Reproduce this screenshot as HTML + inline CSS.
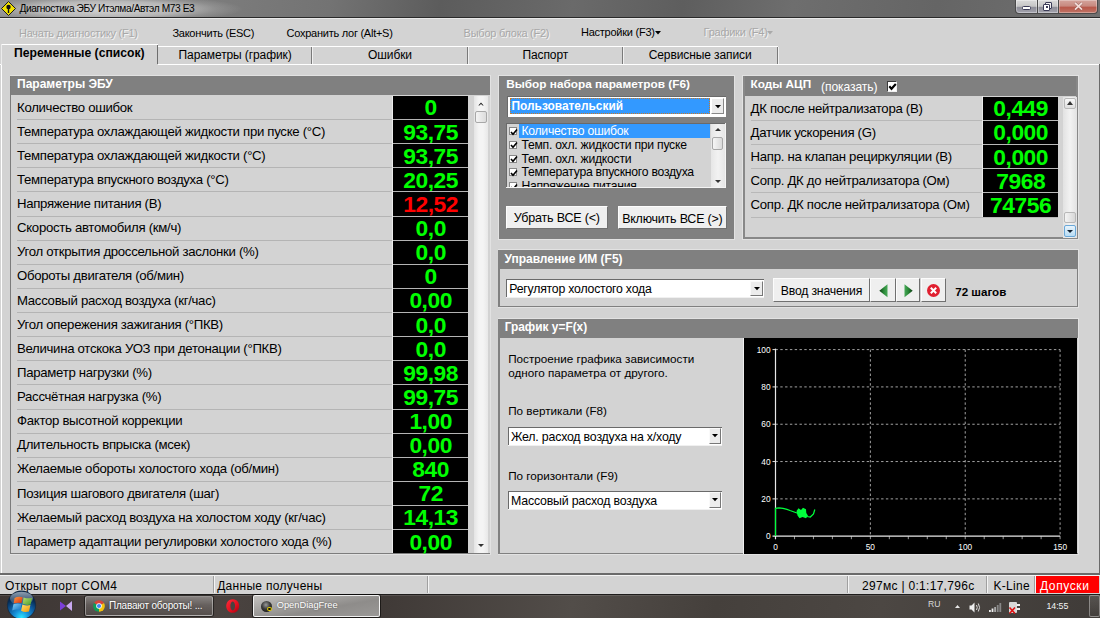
<!DOCTYPE html>
<html><head><meta charset="utf-8"><style>
html,body{margin:0;padding:0;}
body{width:1100px;height:618px;overflow:hidden;position:relative;background:#d3d3d3;font-family:'Liberation Sans', sans-serif;}
</style></head><body>
<div style="position:absolute;left:0;top:0;width:1100px;height:17px;background:linear-gradient(100deg,#8a8a8a 0%,#7a7a7a 22%,#737373 30%,#5c5c5c 40%,#6a6a6a 52%,#5e5e5e 62%,#6e6e6e 72%,#656565 85%,#707070 100%);"></div>
<div style="position:absolute;left:0;top:0;width:270px;height:16.5px;background:radial-gradient(ellipse 135px 14px at 108px 9px,rgba(222,222,222,0.9),rgba(205,205,205,0.7) 55%,rgba(185,185,185,0.3) 80%,rgba(180,180,180,0) 100%);"></div>
<div style="position:absolute;left:0px;top:16.5px;width:1100px;height:1px;background:#2a2a2a;"></div>
<svg style="position:absolute;left:1px;top:1px" width="15" height="15" viewBox="0 0 15 15"><path d="M7.5 0.5 L14.5 7.5 L7.5 14.5 L0.5 7.5Z" fill="#f2e200" stroke="#1a1a1a" stroke-width="1"/><circle cx="7.5" cy="6" r="2.2" fill="#111"/><rect x="6.8" y="7" width="1.4" height="5" fill="#111"/></svg>
<div style="position:absolute;top:3.93px;font-size:10.2px;line-height:10.2px;color:#000;white-space:nowrap;left:19.50px;letter-spacing:-0.4px;">Диагностика ЭБУ Итэлма/Автэл М73 Е3</div>
<div style="position:absolute;left:1015px;top:0;width:22.5px;height:14.2px;border:1px solid #4a4a4a;border-top:none;border-radius:0 0 0 4px;box-sizing:border-box;background:linear-gradient(#dadada,#c6c6c6 48%,#8e8e98 58%,#a4a4ae);box-shadow:inset 0 0 0 1px rgba(255,255,255,0.35);"></div>
<div style="position:absolute;left:1037.5px;top:0;width:21.5px;height:14.2px;border:1px solid #4a4a4a;border-top:none;border-left:none;box-sizing:border-box;background:linear-gradient(#dadada,#c6c6c6 48%,#8e8e98 58%,#a4a4ae);box-shadow:inset 0 0 0 1px rgba(255,255,255,0.35);"></div>
<div style="position:absolute;left:1059px;top:0;width:39px;height:14.2px;border:1px solid #4a4a4a;border-top:none;border-left:none;border-radius:0 0 4px 0;box-sizing:border-box;background:linear-gradient(#d4a49c,#c88a80 45%,#b8584a 58%,#c07466);box-shadow:inset 0 0 0 1px rgba(255,255,255,0.3);"></div>
<div style="position:absolute;left:1022.3px;top:5.9px;width:9.1px;height:4.6px;box-sizing:border-box;background:#fff;border:1.2px solid #3c3c58;border-radius:1.5px;"></div>
<div style="position:absolute;left:1045.3px;top:2px;width:6.5px;height:6.5px;box-sizing:border-box;border:1.2px solid #3c3c58;background:#eee;border-radius:1px;"></div>
<div style="position:absolute;left:1043.3px;top:3.6px;width:7px;height:7px;box-sizing:border-box;border:1.5px solid #3c3c58;background:#fff;border-radius:1px;"></div>
<div style="position:absolute;left:1045.8px;top:6.1px;width:2px;height:2px;background:#3c3c58;"></div>
<svg style="position:absolute;left:1074px;top:2px" width="9" height="8.5" viewBox="0 0 9 8.5"><path d="M1 0.8L8 7.7M8 0.8L1 7.7" stroke="#3c2020" stroke-width="2.6" stroke-opacity="0.35"/><path d="M1 0.8L8 7.7M8 0.8L1 7.7" stroke="#f4dcd8" stroke-width="1.8"/></svg>
<div style="position:absolute;left:0px;top:17.5px;width:1100px;height:1px;background:#e8e8e8;"></div>
<div style="position:absolute;top:27.65px;font-size:11px;line-height:11px;color:#a8a8a8;white-space:nowrap;left:19.00px;letter-spacing:-0.25px;text-shadow:1px 1px 0 #f4f4f4;">Начать диагностику (F1)</div>
<div style="position:absolute;top:27.65px;font-size:11px;line-height:11px;color:#000;white-space:nowrap;left:172.40px;letter-spacing:-0.25px;">Закончить (ESC)</div>
<div style="position:absolute;top:27.65px;font-size:11px;line-height:11px;color:#000;white-space:nowrap;left:286.50px;letter-spacing:-0.25px;">Сохранить лог (Alt+S)</div>
<div style="position:absolute;top:27.65px;font-size:11px;line-height:11px;color:#a8a8a8;white-space:nowrap;left:463.60px;letter-spacing:-0.25px;text-shadow:1px 1px 0 #f4f4f4;">Выбор блока (F2)</div>
<div style="position:absolute;top:26.65px;font-size:11px;line-height:11px;color:#000;white-space:nowrap;left:581.00px;letter-spacing:-0.25px;">Настройки (F3)</div>
<div style="position:absolute;top:26.65px;font-size:11px;line-height:11px;color:#a8a8a8;white-space:nowrap;left:703.60px;letter-spacing:-0.25px;text-shadow:1px 1px 0 #f4f4f4;">Графики (F4)</div>
<svg style="position:absolute;left:655.3px;top:31px" width="6" height="4"><path d="M0 0H6L3 3.5Z" fill="#000"/></svg>
<svg style="position:absolute;left:766.5px;top:31px" width="6" height="4"><path d="M0 0H6L3 3.5Z" fill="#aaa"/></svg>
<div style="position:absolute;left:0px;top:63.5px;width:1100px;height:1px;background:#fff;"></div>
<div style="position:absolute;left:1px;top:63.5px;width:1px;height:510px;background:#fff;"></div>
<div style="position:absolute;left:1098.5px;top:63.5px;width:1.5px;height:510px;background:#6a6a6a;"></div>
<div style="position:absolute;left:0px;top:573px;width:1100px;height:1.5px;background:#6a6a6a;"></div>
<div style="position:absolute;left:158.2px;top:46.3px;width:153.8px;height:1px;background:#fff;"></div>
<div style="position:absolute;left:311px;top:46.5px;width:1.2px;height:17.3px;background:#7a7a7a;"></div>
<div style="position:absolute;left:312.2px;top:46.5px;width:1px;height:17.3px;background:#f0f0f0;"></div>
<div style="position:absolute;top:48.60px;font-size:12px;line-height:12px;color:#000;white-space:nowrap;left:158.20px;width:153.8px;text-align:center;letter-spacing:-0.1px;">Параметры (график)</div>
<div style="position:absolute;left:312px;top:46.3px;width:156px;height:1px;background:#fff;"></div>
<div style="position:absolute;left:467px;top:46.5px;width:1.2px;height:17.3px;background:#7a7a7a;"></div>
<div style="position:absolute;left:468.2px;top:46.5px;width:1px;height:17.3px;background:#f0f0f0;"></div>
<div style="position:absolute;top:48.60px;font-size:12px;line-height:12px;color:#000;white-space:nowrap;left:312.00px;width:156px;text-align:center;letter-spacing:-0.1px;">Ошибки</div>
<div style="position:absolute;left:468px;top:46.3px;width:154.5px;height:1px;background:#fff;"></div>
<div style="position:absolute;left:621.5px;top:46.5px;width:1.2px;height:17.3px;background:#7a7a7a;"></div>
<div style="position:absolute;left:622.7px;top:46.5px;width:1px;height:17.3px;background:#f0f0f0;"></div>
<div style="position:absolute;top:48.60px;font-size:12px;line-height:12px;color:#000;white-space:nowrap;left:468.00px;width:154.5px;text-align:center;letter-spacing:-0.1px;">Паспорт</div>
<div style="position:absolute;left:622.5px;top:46.3px;width:155.29999999999995px;height:1px;background:#fff;"></div>
<div style="position:absolute;left:776.8px;top:46.5px;width:1.2px;height:17.3px;background:#7a7a7a;"></div>
<div style="position:absolute;left:778.0px;top:46.5px;width:1px;height:17.3px;background:#f0f0f0;"></div>
<div style="position:absolute;top:48.60px;font-size:12px;line-height:12px;color:#000;white-space:nowrap;left:622.50px;width:155.29999999999995px;text-align:center;letter-spacing:-0.1px;">Сервисные записи</div>
<div style="position:absolute;left:0.5px;top:43.8px;width:157.7px;height:21px;background:#d3d3d3;"></div>
<div style="position:absolute;left:0.5px;top:43.8px;width:157.7px;height:1px;background:#fff;"></div>
<div style="position:absolute;left:0.5px;top:43.8px;width:1px;height:21px;background:#ececec;"></div>
<div style="position:absolute;left:157px;top:44.5px;width:1.3px;height:19.5px;background:#6e6e6e;"></div>
<div style="position:absolute;top:46.93px;font-size:12.2px;line-height:12.2px;color:#000;white-space:nowrap;font-weight:bold;left:1.30px;width:156px;text-align:center;">Переменные (список)</div>
<div style="position:absolute;left:9.5px;top:75px;width:481px;height:479.5px;background:#e2e2e2;"></div>
<div style="position:absolute;left:10px;top:76.2px;width:479.5px;height:477.8px;background:#d3d3d3;"></div>
<div style="position:absolute;left:10px;top:76.2px;width:479.5px;height:19.3px;background:#808080;"></div>
<div style="position:absolute;left:10px;top:76px;width:1.3px;height:478px;background:#7c7c7c;"></div>
<div style="position:absolute;left:10px;top:552.6px;width:480px;height:1.3px;background:#7c7c7c;"></div>
<div style="position:absolute;top:77.60px;font-size:12px;line-height:12px;color:#fff;white-space:nowrap;font-weight:bold;left:17.00px;">Параметры ЭБУ</div>
<div style="position:absolute;top:100.58px;font-size:13.2px;line-height:13.2px;color:#000;white-space:nowrap;left:17.00px;letter-spacing:-0.3px;">Количество ошибок</div>
<div style="position:absolute;left:393px;top:96.0px;width:75px;height:23.220000000000002px;background:#000;"></div>
<div style="position:absolute;top:96.42px;font-size:22.8px;line-height:22.8px;color:#00ff00;white-space:nowrap;font-weight:bold;left:393.20px;width:75px;text-align:center;letter-spacing:-0.45px;">0</div>
<div style="position:absolute;left:17px;top:119.12px;width:451px;height:1px;background:#b4b4b4;"></div>
<div style="position:absolute;top:124.70px;font-size:13.2px;line-height:13.2px;color:#000;white-space:nowrap;left:17.00px;letter-spacing:-0.3px;">Температура охлаждающей жидкости при пуске (°C)</div>
<div style="position:absolute;left:393px;top:120.12px;width:75px;height:23.220000000000002px;background:#000;"></div>
<div style="position:absolute;top:120.54px;font-size:22.8px;line-height:22.8px;color:#00ff00;white-space:nowrap;font-weight:bold;left:393.20px;width:75px;text-align:center;letter-spacing:-0.45px;">93,75</div>
<div style="position:absolute;left:17px;top:143.24px;width:451px;height:1px;background:#b4b4b4;"></div>
<div style="position:absolute;top:148.82px;font-size:13.2px;line-height:13.2px;color:#000;white-space:nowrap;left:17.00px;letter-spacing:-0.3px;">Температура охлаждающей жидкости (°C)</div>
<div style="position:absolute;left:393px;top:144.24px;width:75px;height:23.220000000000002px;background:#000;"></div>
<div style="position:absolute;top:144.66px;font-size:22.8px;line-height:22.8px;color:#00ff00;white-space:nowrap;font-weight:bold;left:393.20px;width:75px;text-align:center;letter-spacing:-0.45px;">93,75</div>
<div style="position:absolute;left:17px;top:167.36px;width:451px;height:1px;background:#b4b4b4;"></div>
<div style="position:absolute;top:172.94px;font-size:13.2px;line-height:13.2px;color:#000;white-space:nowrap;left:17.00px;letter-spacing:-0.3px;">Температура впускного воздуха (°C)</div>
<div style="position:absolute;left:393px;top:168.36px;width:75px;height:23.220000000000002px;background:#000;"></div>
<div style="position:absolute;top:168.78px;font-size:22.8px;line-height:22.8px;color:#00ff00;white-space:nowrap;font-weight:bold;left:393.20px;width:75px;text-align:center;letter-spacing:-0.45px;">20,25</div>
<div style="position:absolute;left:17px;top:191.48000000000002px;width:451px;height:1px;background:#b4b4b4;"></div>
<div style="position:absolute;top:197.06px;font-size:13.2px;line-height:13.2px;color:#000;white-space:nowrap;left:17.00px;letter-spacing:-0.3px;">Напряжение питания (В)</div>
<div style="position:absolute;left:393px;top:192.48000000000002px;width:75px;height:23.220000000000002px;background:#000;"></div>
<div style="position:absolute;top:192.90px;font-size:22.8px;line-height:22.8px;color:#ff0000;white-space:nowrap;font-weight:bold;left:393.20px;width:75px;text-align:center;letter-spacing:-0.45px;">12,52</div>
<div style="position:absolute;left:17px;top:215.60000000000002px;width:451px;height:1px;background:#b4b4b4;"></div>
<div style="position:absolute;top:221.18px;font-size:13.2px;line-height:13.2px;color:#000;white-space:nowrap;left:17.00px;letter-spacing:-0.3px;">Скорость автомобиля (км/ч)</div>
<div style="position:absolute;left:393px;top:216.60000000000002px;width:75px;height:23.220000000000002px;background:#000;"></div>
<div style="position:absolute;top:217.02px;font-size:22.8px;line-height:22.8px;color:#00ff00;white-space:nowrap;font-weight:bold;left:393.20px;width:75px;text-align:center;letter-spacing:-0.45px;">0,0</div>
<div style="position:absolute;left:17px;top:239.72000000000003px;width:451px;height:1px;background:#b4b4b4;"></div>
<div style="position:absolute;top:245.30px;font-size:13.2px;line-height:13.2px;color:#000;white-space:nowrap;left:17.00px;letter-spacing:-0.3px;">Угол открытия дроссельной заслонки (%)</div>
<div style="position:absolute;left:393px;top:240.72px;width:75px;height:23.220000000000002px;background:#000;"></div>
<div style="position:absolute;top:241.14px;font-size:22.8px;line-height:22.8px;color:#00ff00;white-space:nowrap;font-weight:bold;left:393.20px;width:75px;text-align:center;letter-spacing:-0.45px;">0,0</div>
<div style="position:absolute;left:17px;top:263.84px;width:451px;height:1px;background:#b4b4b4;"></div>
<div style="position:absolute;top:269.42px;font-size:13.2px;line-height:13.2px;color:#000;white-space:nowrap;left:17.00px;letter-spacing:-0.3px;">Обороты двигателя (об/мин)</div>
<div style="position:absolute;left:393px;top:264.84000000000003px;width:75px;height:23.220000000000002px;background:#000;"></div>
<div style="position:absolute;top:265.26px;font-size:22.8px;line-height:22.8px;color:#00ff00;white-space:nowrap;font-weight:bold;left:393.20px;width:75px;text-align:center;letter-spacing:-0.45px;">0</div>
<div style="position:absolute;left:17px;top:287.96000000000004px;width:451px;height:1px;background:#b4b4b4;"></div>
<div style="position:absolute;top:293.54px;font-size:13.2px;line-height:13.2px;color:#000;white-space:nowrap;left:17.00px;letter-spacing:-0.3px;">Массовый расход воздуха (кг/час)</div>
<div style="position:absolute;left:393px;top:288.96000000000004px;width:75px;height:23.220000000000002px;background:#000;"></div>
<div style="position:absolute;top:289.38px;font-size:22.8px;line-height:22.8px;color:#00ff00;white-space:nowrap;font-weight:bold;left:393.20px;width:75px;text-align:center;letter-spacing:-0.45px;">0,00</div>
<div style="position:absolute;left:17px;top:312.08000000000004px;width:451px;height:1px;background:#b4b4b4;"></div>
<div style="position:absolute;top:317.66px;font-size:13.2px;line-height:13.2px;color:#000;white-space:nowrap;left:17.00px;letter-spacing:-0.3px;">Угол опережения зажигания (°ПКВ)</div>
<div style="position:absolute;left:393px;top:313.08000000000004px;width:75px;height:23.220000000000002px;background:#000;"></div>
<div style="position:absolute;top:313.50px;font-size:22.8px;line-height:22.8px;color:#00ff00;white-space:nowrap;font-weight:bold;left:393.20px;width:75px;text-align:center;letter-spacing:-0.45px;">0,0</div>
<div style="position:absolute;left:17px;top:336.20000000000005px;width:451px;height:1px;background:#b4b4b4;"></div>
<div style="position:absolute;top:341.78px;font-size:13.2px;line-height:13.2px;color:#000;white-space:nowrap;left:17.00px;letter-spacing:-0.3px;">Величина отскока УОЗ при детонации (°ПКВ)</div>
<div style="position:absolute;left:393px;top:337.20000000000005px;width:75px;height:23.220000000000002px;background:#000;"></div>
<div style="position:absolute;top:337.62px;font-size:22.8px;line-height:22.8px;color:#00ff00;white-space:nowrap;font-weight:bold;left:393.20px;width:75px;text-align:center;letter-spacing:-0.45px;">0,0</div>
<div style="position:absolute;left:17px;top:360.32000000000005px;width:451px;height:1px;background:#b4b4b4;"></div>
<div style="position:absolute;top:365.90px;font-size:13.2px;line-height:13.2px;color:#000;white-space:nowrap;left:17.00px;letter-spacing:-0.3px;">Параметр нагрузки (%)</div>
<div style="position:absolute;left:393px;top:361.32px;width:75px;height:23.220000000000002px;background:#000;"></div>
<div style="position:absolute;top:361.74px;font-size:22.8px;line-height:22.8px;color:#00ff00;white-space:nowrap;font-weight:bold;left:393.20px;width:75px;text-align:center;letter-spacing:-0.45px;">99,98</div>
<div style="position:absolute;left:17px;top:384.44px;width:451px;height:1px;background:#b4b4b4;"></div>
<div style="position:absolute;top:390.02px;font-size:13.2px;line-height:13.2px;color:#000;white-space:nowrap;left:17.00px;letter-spacing:-0.3px;">Рассчётная нагрузка (%)</div>
<div style="position:absolute;left:393px;top:385.44px;width:75px;height:23.220000000000002px;background:#000;"></div>
<div style="position:absolute;top:385.86px;font-size:22.8px;line-height:22.8px;color:#00ff00;white-space:nowrap;font-weight:bold;left:393.20px;width:75px;text-align:center;letter-spacing:-0.45px;">99,75</div>
<div style="position:absolute;left:17px;top:408.56px;width:451px;height:1px;background:#b4b4b4;"></div>
<div style="position:absolute;top:414.14px;font-size:13.2px;line-height:13.2px;color:#000;white-space:nowrap;left:17.00px;letter-spacing:-0.3px;">Фактор высотной коррекции</div>
<div style="position:absolute;left:393px;top:409.56px;width:75px;height:23.220000000000002px;background:#000;"></div>
<div style="position:absolute;top:409.98px;font-size:22.8px;line-height:22.8px;color:#00ff00;white-space:nowrap;font-weight:bold;left:393.20px;width:75px;text-align:center;letter-spacing:-0.45px;">1,00</div>
<div style="position:absolute;left:17px;top:432.68px;width:451px;height:1px;background:#b4b4b4;"></div>
<div style="position:absolute;top:438.26px;font-size:13.2px;line-height:13.2px;color:#000;white-space:nowrap;left:17.00px;letter-spacing:-0.3px;">Длительность впрыска (мсек)</div>
<div style="position:absolute;left:393px;top:433.68px;width:75px;height:23.220000000000002px;background:#000;"></div>
<div style="position:absolute;top:434.10px;font-size:22.8px;line-height:22.8px;color:#00ff00;white-space:nowrap;font-weight:bold;left:393.20px;width:75px;text-align:center;letter-spacing:-0.45px;">0,00</div>
<div style="position:absolute;left:17px;top:456.8px;width:451px;height:1px;background:#b4b4b4;"></div>
<div style="position:absolute;top:462.38px;font-size:13.2px;line-height:13.2px;color:#000;white-space:nowrap;left:17.00px;letter-spacing:-0.3px;">Желаемые обороты холостого хода (об/мин)</div>
<div style="position:absolute;left:393px;top:457.8px;width:75px;height:23.220000000000002px;background:#000;"></div>
<div style="position:absolute;top:458.22px;font-size:22.8px;line-height:22.8px;color:#00ff00;white-space:nowrap;font-weight:bold;left:393.20px;width:75px;text-align:center;letter-spacing:-0.45px;">840</div>
<div style="position:absolute;left:17px;top:480.92px;width:451px;height:1px;background:#b4b4b4;"></div>
<div style="position:absolute;top:486.50px;font-size:13.2px;line-height:13.2px;color:#000;white-space:nowrap;left:17.00px;letter-spacing:-0.3px;">Позиция шагового двигателя (шаг)</div>
<div style="position:absolute;left:393px;top:481.92px;width:75px;height:23.220000000000002px;background:#000;"></div>
<div style="position:absolute;top:482.34px;font-size:22.8px;line-height:22.8px;color:#00ff00;white-space:nowrap;font-weight:bold;left:393.20px;width:75px;text-align:center;letter-spacing:-0.45px;">72</div>
<div style="position:absolute;left:17px;top:505.04px;width:451px;height:1px;background:#b4b4b4;"></div>
<div style="position:absolute;top:510.62px;font-size:13.2px;line-height:13.2px;color:#000;white-space:nowrap;left:17.00px;letter-spacing:-0.3px;">Желаемый расход воздуха на холостом ходу (кг/час)</div>
<div style="position:absolute;left:393px;top:506.04px;width:75px;height:23.220000000000002px;background:#000;"></div>
<div style="position:absolute;top:506.46px;font-size:22.8px;line-height:22.8px;color:#00ff00;white-space:nowrap;font-weight:bold;left:393.20px;width:75px;text-align:center;letter-spacing:-0.45px;">14,13</div>
<div style="position:absolute;left:17px;top:529.16px;width:451px;height:1px;background:#b4b4b4;"></div>
<div style="position:absolute;top:534.74px;font-size:13.2px;line-height:13.2px;color:#000;white-space:nowrap;left:17.00px;letter-spacing:-0.3px;">Параметр адаптации регулировки холостого хода (%)</div>
<div style="position:absolute;left:393px;top:530.1600000000001px;width:75px;height:22.839999999999918px;background:#000;"></div>
<div style="position:absolute;top:530.58px;font-size:22.8px;line-height:22.8px;color:#00ff00;white-space:nowrap;font-weight:bold;left:393.20px;width:75px;text-align:center;letter-spacing:-0.45px;">0,00</div>
<div style="position:absolute;left:392px;top:95.5px;width:1px;height:457px;background:#ececec;"></div>
<div style="position:absolute;left:474px;top:95.5px;width:14px;height:457.5px;background:linear-gradient(90deg,#e4e4e4,#f4f4f4 35%,#f4f4f4 65%,#e8e8e8);"></div>
<svg style="position:absolute;left:478px;top:101.5px" width="6" height="4"><path d="M0.3 3.5L3 0.6L5.7 3.5L4.6 3.5L3 2L1.4 3.5Z" fill="#222"/></svg>
<div style="position:absolute;left:475px;top:110.5px;width:12px;height:12px;box-sizing:border-box;border:1px solid #a8a8a8;border-radius:2px;background:linear-gradient(90deg,#f4f4f4,#dcdcdc);"></div>
<svg style="position:absolute;left:478px;top:544px" width="6" height="3"><path d="M0 0H6L3 3Z" fill="#333"/></svg>
<div style="position:absolute;left:497.6px;top:75px;width:237.7px;height:165px;background:#e2e2e2;"></div>
<div style="position:absolute;left:498.6px;top:76.2px;width:235.9px;height:162.8px;background:#808080;"></div>
<div style="position:absolute;top:78.57px;font-size:11.8px;line-height:11.8px;color:#fff;white-space:nowrap;font-weight:bold;left:506.20px;">Выбор набора параметров (F6)</div>
<div style="position:absolute;left:507px;top:95.7px;width:219.2px;height:21px;background:#fff;"></div>
<div style="position:absolute;left:507px;top:95.7px;width:219.2px;height:1px;background:#6a6a6a;"></div>
<div style="position:absolute;left:507px;top:95.7px;width:1px;height:21px;background:#6a6a6a;"></div>
<div style="position:absolute;left:509.5px;top:98.2px;width:200.5px;height:16px;background:#3399ff;outline:1px dotted #c87a2a;outline-offset:-1px;"></div>
<div style="position:absolute;top:101.09px;font-size:11.9px;line-height:11.9px;color:#fff;white-space:nowrap;font-weight:bold;left:511.50px;">Пользовательский</div>
<div style="position:absolute;left:711px;top:97.7px;width:13px;height:16.5px;box-sizing:border-box;border:1px solid #888;border-top-color:#fff;border-left-color:#fff;background:#ececec;"></div>
<svg style="position:absolute;left:714.5px;top:104.5px" width="6" height="4"><path d="M0 0H6L3 3.3Z" fill="#000"/></svg>
<div style="position:absolute;left:505.8px;top:122.8px;width:220.5px;height:65.3px;background:#d3d3d3;"></div>
<div style="position:absolute;left:505.8px;top:122.8px;width:220.5px;height:1px;background:#6a6a6a;"></div>
<div style="position:absolute;left:505.8px;top:122.8px;width:1px;height:65.3px;background:#6a6a6a;"></div>
<div style="position:absolute;left:505.8px;top:187.1px;width:220.5px;height:1.2px;background:#f4f4f4;"></div>
<div style="position:absolute;left:725.3px;top:122.8px;width:1.2px;height:65.5px;background:#f4f4f4;"></div>
<div style="position:absolute;left:519.4px;top:124.3px;width:191px;height:13.4px;background:#3399ff;"></div>
<div style="position:absolute;left:506.8px;top:123.8px;width:204px;height:63.3px;overflow:hidden;">
<div style="position:absolute;left:2.5px;top:3.50px;width:8px;height:8px;background:#fff;border:1px solid #888;box-sizing:border-box;"></div>
<svg style="position:absolute;left:3px;top:4.00px" width="8" height="8" viewBox="0 0 8 8"><path d="M1 4L3 6.3L7 1.5" fill="none" stroke="#000" stroke-width="1.6"/></svg>
<div style="position:absolute;left:14.6px;top:1.53px;font-size:12.2px;line-height:12.2px;letter-spacing:-0.25px;white-space:nowrap;color:#fff">Количество ошибок</div>
<div style="position:absolute;left:2.5px;top:17.20px;width:8px;height:8px;background:#fff;border:1px solid #888;box-sizing:border-box;"></div>
<svg style="position:absolute;left:3px;top:17.70px" width="8" height="8" viewBox="0 0 8 8"><path d="M1 4L3 6.3L7 1.5" fill="none" stroke="#000" stroke-width="1.6"/></svg>
<div style="position:absolute;left:14.6px;top:15.23px;font-size:12.2px;line-height:12.2px;letter-spacing:-0.25px;white-space:nowrap;color:#000">Темп. охл. жидкости при пуске</div>
<div style="position:absolute;left:2.5px;top:30.90px;width:8px;height:8px;background:#fff;border:1px solid #888;box-sizing:border-box;"></div>
<svg style="position:absolute;left:3px;top:31.40px" width="8" height="8" viewBox="0 0 8 8"><path d="M1 4L3 6.3L7 1.5" fill="none" stroke="#000" stroke-width="1.6"/></svg>
<div style="position:absolute;left:14.6px;top:28.93px;font-size:12.2px;line-height:12.2px;letter-spacing:-0.25px;white-space:nowrap;color:#000">Темп. охл. жидкости</div>
<div style="position:absolute;left:2.5px;top:44.60px;width:8px;height:8px;background:#fff;border:1px solid #888;box-sizing:border-box;"></div>
<svg style="position:absolute;left:3px;top:45.10px" width="8" height="8" viewBox="0 0 8 8"><path d="M1 4L3 6.3L7 1.5" fill="none" stroke="#000" stroke-width="1.6"/></svg>
<div style="position:absolute;left:14.6px;top:42.63px;font-size:12.2px;line-height:12.2px;letter-spacing:-0.25px;white-space:nowrap;color:#000">Температура впускного воздуха</div>
<div style="position:absolute;left:2.5px;top:58.30px;width:8px;height:8px;background:#fff;border:1px solid #888;box-sizing:border-box;"></div>
<svg style="position:absolute;left:3px;top:58.80px" width="8" height="8" viewBox="0 0 8 8"><path d="M1 4L3 6.3L7 1.5" fill="none" stroke="#000" stroke-width="1.6"/></svg>
<div style="position:absolute;left:14.6px;top:56.33px;font-size:12.2px;line-height:12.2px;letter-spacing:-0.25px;white-space:nowrap;color:#000">Напряжение питания</div>
</div>
<div style="position:absolute;left:711px;top:124px;width:14px;height:63px;background:linear-gradient(90deg,#e6e6e6,#f2f2f2 50%,#e6e6e6);"></div>
<svg style="position:absolute;left:715px;top:128px" width="6" height="3"><path d="M0 3L3 0L6 3Z" fill="#333"/></svg>
<div style="position:absolute;left:712px;top:137px;width:11px;height:13px;box-sizing:border-box;border:1px solid #a8a8a8;border-radius:2px;background:linear-gradient(90deg,#f6f6f6,#dadada);"></div>
<svg style="position:absolute;left:715px;top:180px" width="6" height="3"><path d="M0 0H6L3 3Z" fill="#333"/></svg>
<div style="position:absolute;left:506px;top:206.2px;width:101.5px;height:23.2px;box-sizing:border-box;border:1px solid #707070;border-top-color:#fcfcfc;border-left-color:#fcfcfc;background:#efefef;"></div>
<div style="position:absolute;top:212.49px;font-size:12.565999999999999px;line-height:12.565999999999999px;color:#000;white-space:nowrap;left:506.00px;width:101.5px;text-align:center;letter-spacing:-0.2px;">Убрать ВСЕ (<)</div>
<div style="position:absolute;left:617.5px;top:206.2px;width:109.6px;height:23.2px;box-sizing:border-box;border:1px solid #707070;border-top-color:#fcfcfc;border-left-color:#fcfcfc;background:#efefef;"></div>
<div style="position:absolute;top:212.54px;font-size:12.463px;line-height:12.463px;color:#000;white-space:nowrap;left:617.50px;width:109.6px;text-align:center;letter-spacing:-0.2px;">Включить ВСЕ (>)</div>
<div style="position:absolute;left:742.4px;top:75px;width:336.3px;height:165px;background:#e2e2e2;"></div>
<div style="position:absolute;left:743.2px;top:76.2px;width:334.7px;height:163px;background:#d3d3d3;"></div>
<div style="position:absolute;left:743.2px;top:76.2px;width:334.7px;height:19.5px;background:#808080;"></div>
<div style="position:absolute;left:743.2px;top:76.2px;width:2px;height:163px;background:#888;"></div>
<div style="position:absolute;left:743.2px;top:237.4px;width:334.7px;height:1.8px;background:#888;"></div>
<div style="position:absolute;left:1076.2px;top:76.2px;width:1.7px;height:163px;background:#888;"></div>
<div style="position:absolute;top:79.17px;font-size:11.8px;line-height:11.8px;color:#fff;white-space:nowrap;font-weight:bold;left:750.50px;">Коды АЦП</div>
<div style="position:absolute;top:80.92px;font-size:12.1px;line-height:12.1px;color:#fff;white-space:nowrap;left:821.00px;letter-spacing:-0.1px;">(показать)</div>
<div style="position:absolute;left:886.6px;top:81.3px;width:10.5px;height:10.7px;box-sizing:border-box;background:#fff;border:1px solid #f0f0f0;border-top-color:#3a3a3a;border-left-color:#3a3a3a;"></div>
<svg style="position:absolute;left:887.6px;top:82.3px" width="9" height="9" viewBox="0 0 9 9"><path d="M1.3 4.3L3.5 6.8L7.8 2" fill="none" stroke="#000" stroke-width="2.1"/></svg>
<div style="position:absolute;top:101.68px;font-size:13.2px;line-height:13.2px;color:#000;white-space:nowrap;left:750.60px;letter-spacing:-0.3px;">ДК после нейтрализатора (В)</div>
<div style="position:absolute;left:983px;top:96.9px;width:75px;height:23.220000000000002px;background:#000;"></div>
<div style="position:absolute;top:97.32px;font-size:22.8px;line-height:22.8px;color:#00ff00;white-space:nowrap;font-weight:bold;left:983.20px;width:75px;text-align:center;letter-spacing:-0.45px;">0,449</div>
<div style="position:absolute;left:750.6px;top:120.02000000000001px;width:307.4px;height:1px;background:#b8b8b8;"></div>
<div style="position:absolute;top:125.80px;font-size:13.2px;line-height:13.2px;color:#000;white-space:nowrap;left:750.60px;letter-spacing:-0.3px;">Датчик ускорения (G)</div>
<div style="position:absolute;left:983px;top:121.02000000000001px;width:75px;height:23.220000000000002px;background:#000;"></div>
<div style="position:absolute;top:121.44px;font-size:22.8px;line-height:22.8px;color:#00ff00;white-space:nowrap;font-weight:bold;left:983.20px;width:75px;text-align:center;letter-spacing:-0.45px;">0,000</div>
<div style="position:absolute;left:750.6px;top:144.14000000000001px;width:307.4px;height:1px;background:#b8b8b8;"></div>
<div style="position:absolute;top:149.92px;font-size:13.2px;line-height:13.2px;color:#000;white-space:nowrap;left:750.60px;letter-spacing:-0.3px;">Напр. на клапан рециркуляции (В)</div>
<div style="position:absolute;left:983px;top:145.14000000000001px;width:75px;height:23.220000000000002px;background:#000;"></div>
<div style="position:absolute;top:145.56px;font-size:22.8px;line-height:22.8px;color:#00ff00;white-space:nowrap;font-weight:bold;left:983.20px;width:75px;text-align:center;letter-spacing:-0.45px;">0,000</div>
<div style="position:absolute;left:750.6px;top:168.26000000000002px;width:307.4px;height:1px;background:#b8b8b8;"></div>
<div style="position:absolute;top:174.04px;font-size:13.2px;line-height:13.2px;color:#000;white-space:nowrap;left:750.60px;letter-spacing:-0.3px;">Сопр. ДК до нейтрализатора (Ом)</div>
<div style="position:absolute;left:983px;top:169.26px;width:75px;height:23.220000000000002px;background:#000;"></div>
<div style="position:absolute;top:169.68px;font-size:22.8px;line-height:22.8px;color:#00ff00;white-space:nowrap;font-weight:bold;left:983.20px;width:75px;text-align:center;letter-spacing:-0.45px;">7968</div>
<div style="position:absolute;left:750.6px;top:192.38px;width:307.4px;height:1px;background:#b8b8b8;"></div>
<div style="position:absolute;top:198.16px;font-size:13.2px;line-height:13.2px;color:#000;white-space:nowrap;left:750.60px;letter-spacing:-0.3px;">Сопр. ДК после нейтрализатора (Ом)</div>
<div style="position:absolute;left:983px;top:193.38px;width:75px;height:23.220000000000002px;background:#000;"></div>
<div style="position:absolute;top:193.80px;font-size:22.8px;line-height:22.8px;color:#00ff00;white-space:nowrap;font-weight:bold;left:983.20px;width:75px;text-align:center;letter-spacing:-0.45px;">74756</div>
<div style="position:absolute;left:750.6px;top:216.5px;width:307.4px;height:1px;background:#b8b8b8;"></div>
<div style="position:absolute;left:982px;top:95.7px;width:1px;height:121px;background:#ececec;"></div>
<div style="position:absolute;left:1063.3px;top:96.5px;width:13.6px;height:141px;background:linear-gradient(90deg,#e2e2e2,#f2f2f2 50%,#e2e2e2);"></div>
<div style="position:absolute;left:1063.8px;top:97.7px;width:12.6px;height:11.6px;box-sizing:border-box;border:1px solid #b8b8b8;border-radius:2px;background:linear-gradient(#f8f8f8,#dedede);"></div>
<svg style="position:absolute;left:1067px;top:101px" width="6" height="4"><path d="M0 4L3 0L6 4Z" fill="#333"/></svg>
<div style="position:absolute;left:1063.8px;top:211.8px;width:12.6px;height:11.6px;box-sizing:border-box;border:1px solid #b8b8b8;border-radius:2px;background:linear-gradient(90deg,#f4f4f4,#d8d8d8);"></div>
<div style="position:absolute;left:1063.8px;top:225px;width:12.6px;height:12px;box-sizing:border-box;border:1px solid #6aa8d8;border-radius:2px;background:linear-gradient(#e8f4fc,#b8dcf4);"></div>
<svg style="position:absolute;left:1067px;top:230px" width="6" height="3"><path d="M0 0H6L3 3Z" fill="#123"/></svg>
<div style="position:absolute;left:497.5px;top:249.4px;width:581.2px;height:58.3px;background:#e2e2e2;"></div>
<div style="position:absolute;left:498.3px;top:250.4px;width:579.6px;height:56.5px;background:#d3d3d3;"></div>
<div style="position:absolute;left:498.3px;top:250.4px;width:579.6px;height:19px;background:#808080;"></div>
<div style="position:absolute;left:498.3px;top:250.4px;width:1.3px;height:56.5px;background:#808080;"></div>
<div style="position:absolute;left:498.3px;top:305.6px;width:579.6px;height:1.3px;background:#808080;"></div>
<div style="position:absolute;left:1076.6px;top:250.4px;width:1.3px;height:56.5px;background:#808080;"></div>
<div style="position:absolute;top:252.90px;font-size:12px;line-height:12px;color:#fff;white-space:nowrap;font-weight:bold;left:504.40px;">Управление ИМ (F5)</div>
<div style="position:absolute;left:505.8px;top:279px;width:258.2px;height:19.30000000000001px;background:#fff;"></div>
<div style="position:absolute;left:505.8px;top:279px;width:258.2px;height:1px;background:#6a6a6a;"></div>
<div style="position:absolute;left:505.8px;top:279px;width:1px;height:19.30000000000001px;background:#6a6a6a;"></div>
<div style="position:absolute;left:505.8px;top:297.3px;width:258.2px;height:1px;background:#f0f0f0;"></div>
<div style="position:absolute;top:283.27px;font-size:12.272000000000002px;line-height:12.272000000000002px;color:#000;white-space:nowrap;left:509.20px;letter-spacing:-0.2px;">Регулятор холостого хода</div>
<div style="position:absolute;left:750px;top:280.5px;width:12.5px;height:15.800000000000011px;box-sizing:border-box;border:1px solid #777;border-top-color:#fafafa;border-left-color:#fafafa;background:#ececec;"></div>
<svg style="position:absolute;left:753.5px;top:287.05px" width="6" height="4"><path d="M0 0H6L3 3.3Z" fill="#000"/></svg>
<div style="position:absolute;left:773px;top:278.4px;width:97px;height:23.6px;box-sizing:border-box;border:1px solid #707070;border-top-color:#fcfcfc;border-left-color:#fcfcfc;background:#efefef;"></div>
<div style="position:absolute;top:285.05px;font-size:12.257000000000001px;line-height:12.257000000000001px;color:#000;white-space:nowrap;left:773.00px;width:97px;text-align:center;letter-spacing:-0.2px;">Ввод значения</div>
<div style="position:absolute;left:870px;top:278.4px;width:25.5px;height:23.6px;box-sizing:border-box;border:1px solid #707070;border-top-color:#fcfcfc;border-left-color:#fcfcfc;background:#efefef;"></div>
<div style="position:absolute;left:895.5px;top:278.4px;width:24.5px;height:23.6px;box-sizing:border-box;border:1px solid #707070;border-top-color:#fcfcfc;border-left-color:#fcfcfc;background:#efefef;"></div>
<div style="position:absolute;left:920.6px;top:278.4px;width:25px;height:23.6px;box-sizing:border-box;border:1px solid #707070;border-top-color:#fcfcfc;border-left-color:#fcfcfc;background:#efefef;"></div>
<svg style="position:absolute;left:878.5px;top:283.8px" width="9" height="14" viewBox="0 0 9 14"><defs><linearGradient id="gl" x1="0" x2="1"><stop offset="0" stop-color="#0c3a12"/><stop offset="0.55" stop-color="#2a8a38"/><stop offset="1" stop-color="#48a858"/></linearGradient></defs><path d="M8.5 0.3L0.3 6.8L8.5 13.3Z" fill="url(#gl)"/></svg>
<svg style="position:absolute;left:903.5px;top:283.8px" width="9" height="14" viewBox="0 0 9 14"><defs><linearGradient id="gr" x1="0" x2="1"><stop offset="0" stop-color="#48a858"/><stop offset="0.45" stop-color="#2a8a38"/><stop offset="1" stop-color="#0c3a12"/></linearGradient></defs><path d="M0.5 0.3L8.7 6.8L0.5 13.3Z" fill="url(#gr)"/></svg>
<svg style="position:absolute;left:925.5px;top:283px" width="15" height="15" viewBox="0 0 15 15"><circle cx="7.5" cy="7.5" r="6.5" fill="#e02030"/><path d="M4.8 4.8L10.2 10.2M10.2 4.8L4.8 10.2" stroke="#fff" stroke-width="2"/></svg>
<div style="position:absolute;top:285.74px;font-size:11.6px;line-height:11.6px;color:#000;white-space:nowrap;font-weight:bold;left:955.20px;">72 шагов</div>
<div style="position:absolute;left:497.5px;top:317.8px;width:581.2px;height:237px;background:#e2e2e2;"></div>
<div style="position:absolute;left:498.3px;top:318.8px;width:579.6px;height:235.2px;background:#d3d3d3;"></div>
<div style="position:absolute;left:498.3px;top:318.8px;width:579.6px;height:19.5px;background:#808080;"></div>
<div style="position:absolute;left:498.3px;top:318.8px;width:1.3px;height:235.2px;background:#808080;"></div>
<div style="position:absolute;left:498.3px;top:552.7px;width:579.6px;height:1.3px;background:#808080;"></div>
<div style="position:absolute;top:321.58px;font-size:11.9px;line-height:11.9px;color:#fff;white-space:nowrap;font-weight:bold;left:504.70px;">График y=F(x)</div>
<div style="position:absolute;top:352.56px;font-size:11.7px;line-height:11.7px;color:#000;white-space:nowrap;left:508.20px;">Построение графика зависимости</div>
<div style="position:absolute;top:366.56px;font-size:11.7px;line-height:11.7px;color:#000;white-space:nowrap;left:508.20px;">одного параметра от другого.</div>
<div style="position:absolute;top:405.25px;font-size:11.7px;line-height:11.7px;color:#000;white-space:nowrap;left:508.20px;">По вертикали (F8)</div>
<div style="position:absolute;left:507.6px;top:426.5px;width:214.89999999999998px;height:19.0px;background:#fff;"></div>
<div style="position:absolute;left:507.6px;top:426.5px;width:214.89999999999998px;height:1px;background:#6a6a6a;"></div>
<div style="position:absolute;left:507.6px;top:426.5px;width:1px;height:19.0px;background:#6a6a6a;"></div>
<div style="position:absolute;left:507.6px;top:444.5px;width:214.89999999999998px;height:1px;background:#f0f0f0;"></div>
<div style="position:absolute;top:430.56px;font-size:12.376000000000001px;line-height:12.376000000000001px;color:#000;white-space:nowrap;left:511.00px;letter-spacing:-0.2px;">Жел. расход воздуха на х/ходу</div>
<div style="position:absolute;left:708.5px;top:428.0px;width:12.5px;height:15.5px;box-sizing:border-box;border:1px solid #777;border-top-color:#fafafa;border-left-color:#fafafa;background:#ececec;"></div>
<svg style="position:absolute;left:712.0px;top:434.40px" width="6" height="4"><path d="M0 0H6L3 3.3Z" fill="#000"/></svg>
<div style="position:absolute;top:470.16px;font-size:11.7px;line-height:11.7px;color:#000;white-space:nowrap;left:508.20px;">По горизонтали (F9)</div>
<div style="position:absolute;left:507.6px;top:490.5px;width:214.89999999999998px;height:19.0px;background:#fff;"></div>
<div style="position:absolute;left:507.6px;top:490.5px;width:214.89999999999998px;height:1px;background:#6a6a6a;"></div>
<div style="position:absolute;left:507.6px;top:490.5px;width:1px;height:19.0px;background:#6a6a6a;"></div>
<div style="position:absolute;left:507.6px;top:508.5px;width:214.89999999999998px;height:1px;background:#f0f0f0;"></div>
<div style="position:absolute;top:494.56px;font-size:12.376000000000001px;line-height:12.376000000000001px;color:#000;white-space:nowrap;left:511.00px;letter-spacing:-0.2px;">Массовый расход воздуха</div>
<div style="position:absolute;left:708.5px;top:492.0px;width:12.5px;height:15.5px;box-sizing:border-box;border:1px solid #777;border-top-color:#fafafa;border-left-color:#fafafa;background:#ececec;"></div>
<svg style="position:absolute;left:712.0px;top:498.40px" width="6" height="4"><path d="M0 0H6L3 3.3Z" fill="#000"/></svg>
<div style="position:absolute;left:743.8px;top:338.3px;width:333.20000000000005px;height:215.40000000000003px;background:#000;"></div>
<div style="position:absolute;left:743.3px;top:338.3px;width:1px;height:215.40000000000003px;background:#f0f0f0;"></div>
<svg style="position:absolute;left:0;top:0" width="1100" height="618"><line x1="775.5" y1="498.88" x2="1060.10" y2="498.88" stroke="#b4b4b4" stroke-width="0.9" stroke-dasharray="2.4,2.4"/><line x1="772.5" y1="498.88" x2="775.5" y2="498.88" stroke="#e0e0e0" stroke-width="1"/><line x1="775.5" y1="461.56" x2="1060.10" y2="461.56" stroke="#b4b4b4" stroke-width="0.9" stroke-dasharray="2.4,2.4"/><line x1="772.5" y1="461.56" x2="775.5" y2="461.56" stroke="#e0e0e0" stroke-width="1"/><line x1="775.5" y1="424.24" x2="1060.10" y2="424.24" stroke="#b4b4b4" stroke-width="0.9" stroke-dasharray="2.4,2.4"/><line x1="772.5" y1="424.24" x2="775.5" y2="424.24" stroke="#e0e0e0" stroke-width="1"/><line x1="775.5" y1="386.92" x2="1060.10" y2="386.92" stroke="#b4b4b4" stroke-width="0.9" stroke-dasharray="2.4,2.4"/><line x1="772.5" y1="386.92" x2="775.5" y2="386.92" stroke="#e0e0e0" stroke-width="1"/><line x1="775.5" y1="349.60" x2="1060.10" y2="349.60" stroke="#b4b4b4" stroke-width="0.9" stroke-dasharray="2.4,2.4"/><line x1="772.5" y1="349.60" x2="775.5" y2="349.60" stroke="#e0e0e0" stroke-width="1"/><line x1="870.37" y1="349.60" x2="870.37" y2="536.2" stroke="#b4b4b4" stroke-width="0.9" stroke-dasharray="2.4,2.4"/><line x1="965.23" y1="349.60" x2="965.23" y2="536.2" stroke="#b4b4b4" stroke-width="0.9" stroke-dasharray="2.4,2.4"/><line x1="1060.10" y1="349.60" x2="1060.10" y2="536.2" stroke="#b4b4b4" stroke-width="0.9" stroke-dasharray="2.4,2.4"/><line x1="775.50" y1="536.2" x2="775.50" y2="539.2" stroke="#c0c0c0" stroke-width="0.8"/><line x1="794.47" y1="536.2" x2="794.47" y2="539.2" stroke="#c0c0c0" stroke-width="0.8"/><line x1="813.45" y1="536.2" x2="813.45" y2="539.2" stroke="#c0c0c0" stroke-width="0.8"/><line x1="832.42" y1="536.2" x2="832.42" y2="539.2" stroke="#c0c0c0" stroke-width="0.8"/><line x1="851.39" y1="536.2" x2="851.39" y2="539.2" stroke="#c0c0c0" stroke-width="0.8"/><line x1="870.37" y1="536.2" x2="870.37" y2="539.2" stroke="#c0c0c0" stroke-width="0.8"/><line x1="889.34" y1="536.2" x2="889.34" y2="539.2" stroke="#c0c0c0" stroke-width="0.8"/><line x1="908.31" y1="536.2" x2="908.31" y2="539.2" stroke="#c0c0c0" stroke-width="0.8"/><line x1="927.29" y1="536.2" x2="927.29" y2="539.2" stroke="#c0c0c0" stroke-width="0.8"/><line x1="946.26" y1="536.2" x2="946.26" y2="539.2" stroke="#c0c0c0" stroke-width="0.8"/><line x1="965.23" y1="536.2" x2="965.23" y2="539.2" stroke="#c0c0c0" stroke-width="0.8"/><line x1="984.21" y1="536.2" x2="984.21" y2="539.2" stroke="#c0c0c0" stroke-width="0.8"/><line x1="1003.18" y1="536.2" x2="1003.18" y2="539.2" stroke="#c0c0c0" stroke-width="0.8"/><line x1="1022.15" y1="536.2" x2="1022.15" y2="539.2" stroke="#c0c0c0" stroke-width="0.8"/><line x1="1041.13" y1="536.2" x2="1041.13" y2="539.2" stroke="#c0c0c0" stroke-width="0.8"/><line x1="1060.10" y1="536.2" x2="1060.10" y2="539.2" stroke="#c0c0c0" stroke-width="0.8"/><line x1="775.5" y1="348.60" x2="775.5" y2="539.2" stroke="#e8e8e8" stroke-width="1.2"/><line x1="772.5" y1="536.2" x2="1060.10" y2="536.2" stroke="#e8e8e8" stroke-width="1.2"/><polyline points="775.5,536 775.5,508.3 779,507.9 783,508.4 787,509.3 790,510.5 797,513 800,514 803,515 807,516.5 810.3,517 813.5,514 814.8,509.5" fill="none" stroke="#00ff3c" stroke-width="1.25"/><path d="M796.5 511L798.5 508.3L801 510L803 507.8L806 509.3L806.3 513L808 515.8L806 518.2L802.5 517L799.5 518.3L797.5 515.5Z" fill="#00ff3c"/></svg>
<div style="position:absolute;top:532.35px;font-size:8.3px;line-height:8.3px;color:#fff;white-space:nowrap;left:740.50px;width:30px;text-align:right;">0</div>
<div style="position:absolute;top:495.03px;font-size:8.3px;line-height:8.3px;color:#fff;white-space:nowrap;left:740.50px;width:30px;text-align:right;">20</div>
<div style="position:absolute;top:457.71px;font-size:8.3px;line-height:8.3px;color:#fff;white-space:nowrap;left:740.50px;width:30px;text-align:right;">40</div>
<div style="position:absolute;top:420.38px;font-size:8.3px;line-height:8.3px;color:#fff;white-space:nowrap;left:740.50px;width:30px;text-align:right;">60</div>
<div style="position:absolute;top:383.06px;font-size:8.3px;line-height:8.3px;color:#fff;white-space:nowrap;left:740.50px;width:30px;text-align:right;">80</div>
<div style="position:absolute;top:345.75px;font-size:8.3px;line-height:8.3px;color:#fff;white-space:nowrap;left:740.50px;width:30px;text-align:right;">100</div>
<div style="position:absolute;top:542.75px;font-size:8.3px;line-height:8.3px;color:#fff;white-space:nowrap;left:760.50px;width:30px;text-align:center;">0</div>
<div style="position:absolute;top:542.75px;font-size:8.3px;line-height:8.3px;color:#fff;white-space:nowrap;left:855.37px;width:30px;text-align:center;">50</div>
<div style="position:absolute;top:542.75px;font-size:8.3px;line-height:8.3px;color:#fff;white-space:nowrap;left:950.23px;width:30px;text-align:center;">100</div>
<div style="position:absolute;top:542.75px;font-size:8.3px;line-height:8.3px;color:#fff;white-space:nowrap;left:1045.10px;width:30px;text-align:center;">150</div>
<div style="position:absolute;left:0px;top:574.5px;width:1100px;height:19px;background:#d3d3d3;"></div>
<div style="position:absolute;left:0px;top:575px;width:1100px;height:0.8px;background:#f4f4f4;"></div>
<div style="position:absolute;left:213.1px;top:575.5px;width:1px;height:17.5px;background:#a0a0a0;"></div>
<div style="position:absolute;left:214.1px;top:575.5px;width:1px;height:17.5px;background:#f4f4f4;"></div>
<div style="position:absolute;left:427.1px;top:575.5px;width:1px;height:17.5px;background:#a0a0a0;"></div>
<div style="position:absolute;left:428.1px;top:575.5px;width:1px;height:17.5px;background:#f4f4f4;"></div>
<div style="position:absolute;left:847.0px;top:575.5px;width:1px;height:17.5px;background:#a0a0a0;"></div>
<div style="position:absolute;left:848.0px;top:575.5px;width:1px;height:17.5px;background:#f4f4f4;"></div>
<div style="position:absolute;left:986.2px;top:575.5px;width:1px;height:17.5px;background:#a0a0a0;"></div>
<div style="position:absolute;left:987.2px;top:575.5px;width:1px;height:17.5px;background:#f4f4f4;"></div>
<div style="position:absolute;left:1034.0px;top:575.5px;width:1px;height:17.5px;background:#a0a0a0;"></div>
<div style="position:absolute;left:1035.0px;top:575.5px;width:1px;height:17.5px;background:#f4f4f4;"></div>
<div style="position:absolute;top:579.70px;font-size:12.0px;line-height:12.0px;color:#000;white-space:nowrap;left:5.10px;letter-spacing:0.3px;">Открыт порт COM4</div>
<div style="position:absolute;top:579.70px;font-size:12.0px;line-height:12.0px;color:#000;white-space:nowrap;left:217.20px;letter-spacing:0.3px;">Данные получены</div>
<div style="position:absolute;top:579.70px;font-size:12.0px;line-height:12.0px;color:#000;white-space:nowrap;left:862.00px;letter-spacing:0.3px;">297мс | 0:1:17,796с</div>
<div style="position:absolute;top:579.70px;font-size:12.0px;line-height:12.0px;color:#000;white-space:nowrap;left:993.50px;letter-spacing:0.3px;">K-Line</div>
<div style="position:absolute;left:1036.3px;top:576.4px;width:62.3px;height:16.5px;background:#ff0000;"></div>
<div style="position:absolute;top:579.70px;font-size:12.0px;line-height:12.0px;color:#fff;white-space:nowrap;left:1040.00px;letter-spacing:0.6px;">Допуски</div>
<div style="position:absolute;left:0;top:593.5px;width:1100px;height:24.5px;background:linear-gradient(100deg,#3d3634 0%,#4a4340 20%,#403a37 35%,#524d49 52%,#45403c 65%,#4c4743 80%,#3f3b38 100%);border-top:1px solid #1e1c1b;box-sizing:border-box;"></div>
<div style="position:absolute;left:0;top:594.5px;width:1100px;height:1px;background:rgba(255,255,255,0.12);"></div>
<svg style="position:absolute;left:0;top:586px" width="45" height="32" viewBox="0 586 45 32"><defs><radialGradient id="orb" cx="0.5" cy="0.95" r="0.75"><stop offset="0" stop-color="#2ee6ff"/><stop offset="0.35" stop-color="#1790d8"/><stop offset="0.7" stop-color="#0b5596"/><stop offset="1" stop-color="#06284e"/></radialGradient><linearGradient id="hl" x1="0" y1="0" x2="0" y2="1"><stop offset="0" stop-color="#fff" stop-opacity="0.55"/><stop offset="1" stop-color="#fff" stop-opacity="0.05"/></linearGradient><linearGradient id="lr" x1="0" y1="0" x2="1" y2="1"><stop offset="0" stop-color="#ff9a40"/><stop offset="1" stop-color="#d82c0c"/></linearGradient><linearGradient id="lg" x1="0" y1="0" x2="1" y2="1"><stop offset="0" stop-color="#b8e070"/><stop offset="1" stop-color="#4a9a28"/></linearGradient><linearGradient id="lb" x1="0" y1="0" x2="1" y2="1"><stop offset="0" stop-color="#80d0f8"/><stop offset="1" stop-color="#1470c0"/></linearGradient><linearGradient id="ly" x1="0" y1="0" x2="1" y2="1"><stop offset="0" stop-color="#ffe070"/><stop offset="1" stop-color="#f09800"/></linearGradient></defs><circle cx="21.5" cy="605" r="14.6" fill="#1a2c40"/><circle cx="21.5" cy="605" r="13.8" fill="url(#orb)"/><ellipse cx="21.5" cy="598.5" rx="11.5" ry="6.8" fill="url(#hl)"/><path d="M14.6 597.9Q18.2 595.9 22.6 597.2L21.6 603.1Q17.8 602.1 13.6 603.6Z" fill="url(#lr)"/><path d="M23.6 597.4Q27.6 599 32.1 597.9L30.6 604.4Q26.6 605.6 22.6 603.8Z" fill="url(#lg)"/><path d="M13.4 604.3Q17.2 602.9 21.4 604L20.4 610.1Q16.6 609 12.2 610.4Z" fill="url(#lb)"/><path d="M22.4 604.5Q26.2 606.2 30.4 605.1L29 611.6Q24.6 612.9 21.1 610.8Z" fill="url(#ly)"/></svg>
<svg style="position:absolute;left:60px;top:601px" width="12" height="10" viewBox="0 0 12 10"><path d="M0 0.5L6 5L0 9.5Z" fill="#7b3fd8"/><path d="M12 0L6 5L12 10Z" fill="#c8a8f0"/></svg>
<div style="position:absolute;left:84.9px;top:595.7px;width:127.7px;height:20.5px;box-sizing:border-box;border:1px solid rgba(255,255,255,0.38);border-radius:2px;background:linear-gradient(rgba(255,255,255,0.34),rgba(255,255,255,0.16) 45%,rgba(255,255,255,0.07) 100%);box-shadow:0 0 0 1px rgba(0,0,0,0.45);"></div>
<svg style="position:absolute;left:93px;top:600.3px" width="12" height="12" viewBox="0 0 12 12"><path d="M6 6L0.98 3.1A5.8 5.8 0 0 1 11.02 3.1Z" fill="#db4437"/><path d="M6 6L11.02 3.1A5.8 5.8 0 0 1 6 11.8Z" fill="#f4c20d"/><path d="M6 6L6 11.8A5.8 5.8 0 0 1 0.98 3.1Z" fill="#0f9d58"/><circle cx="6" cy="6" r="2.8" fill="#fff"/><circle cx="6" cy="6" r="2.1" fill="#4285f4"/></svg>
<div style="position:absolute;top:600.90px;font-size:10px;line-height:10px;color:#fff;white-space:nowrap;left:109.00px;text-shadow:0 0 2px rgba(0,0,0,0.5);letter-spacing:-0.2px;">Плавают обороты! ...</div>
<svg style="position:absolute;left:226px;top:599px" width="14" height="14" viewBox="0 0 14 14"><defs><linearGradient id="op" x1="0" y1="0" x2="1" y2="1"><stop offset="0" stop-color="#ff2a3a"/><stop offset="0.6" stop-color="#e0101e"/><stop offset="1" stop-color="#a00010"/></linearGradient></defs><path fill-rule="evenodd" d="M6.7 0.2A6.5 6.8 0 1 0 6.71 0.2ZM6.7 2.4A2.3 4.5 0 1 0 6.71 2.4Z" fill="url(#op)"/></svg>
<div style="position:absolute;left:252.7px;top:595.4px;width:127.5px;height:21.4px;box-sizing:border-box;border:1px solid rgba(255,255,255,0.85);border-radius:2px;background:linear-gradient(170deg,#c4c2c0 0%,#a4a2a0 35%,#8e8c8a 60%,#9a9896 100%);box-shadow:0 0 0 1px rgba(0,0,0,0.55);"></div>
<div style="position:absolute;left:260.5px;top:600.5px;width:11px;height:11px;border-radius:50%;background:radial-gradient(circle at 45% 35%,#9a9a9a,#3a3a3a 45%,#0a0a0a);"></div>
<div style="position:absolute;left:267px;top:606.8px;width:5px;height:4.5px;border-radius:50%;background:#111;border:1.3px solid #e6d000;box-sizing:border-box;"></div>
<div style="position:absolute;top:601.30px;font-size:9.3px;line-height:9.3px;color:#fff;white-space:nowrap;left:276.70px;text-shadow:0 0 2px rgba(0,0,0,0.45);">OpenDiagFree</div>
<div style="position:absolute;top:599.99px;font-size:8.6px;line-height:8.6px;color:#d8d8d8;white-space:nowrap;left:928.10px;">RU</div>
<svg style="position:absolute;left:955px;top:604.5px" width="5" height="3"><path d="M0 3L2.5 0L5 3Z" fill="#e8e8e8"/></svg>
<svg style="position:absolute;left:969px;top:601.5px" width="12" height="11" viewBox="0 0 12 11"><path d="M0.5 3.5H2.5L5.5 0.5V10.5L2.5 7.5H0.5Z" fill="#eee"/><path d="M7.5 3Q9 5.5 7.5 8M9.3 1.5Q11.8 5.5 9.3 9.5" fill="none" stroke="#ddd" stroke-width="1"/></svg>
<svg style="position:absolute;left:989px;top:602px" width="13" height="10" viewBox="0 0 13 10"><rect x="0" y="8" width="1.8" height="2" fill="#eee"/><rect x="2.6" y="6.5" width="1.8" height="3.5" fill="#eee"/><rect x="5.2" y="5" width="1.8" height="5" fill="#aaa"/><rect x="7.8" y="3" width="1.8" height="7" fill="#888"/><rect x="10.4" y="1" width="1.8" height="9" fill="#888"/></svg>
<svg style="position:absolute;left:1008px;top:601px" width="13" height="13" viewBox="0 0 13 13"><rect x="1" y="1" width="8" height="11" rx="1" fill="#d8d8d8"/><rect x="8.5" y="3" width="3.5" height="2" fill="#eee"/><rect x="8.5" y="7" width="3.5" height="2" fill="#eee"/><path d="M1.5 6.5L7 12.5M7 6.5L1.5 12.5" stroke="#e01010" stroke-width="1.6"/></svg>
<div style="position:absolute;top:602.42px;font-size:8.8px;line-height:8.8px;color:#f4f4f4;white-space:nowrap;left:1046.40px;">14:55</div>
<div style="position:absolute;left:1088.8px;top:595px;width:11.2px;height:22px;box-sizing:border-box;border:1px solid rgba(255,255,255,0.35);border-radius:2px;background:linear-gradient(rgba(255,255,255,0.12),rgba(255,255,255,0.02));"></div>
</body></html>
